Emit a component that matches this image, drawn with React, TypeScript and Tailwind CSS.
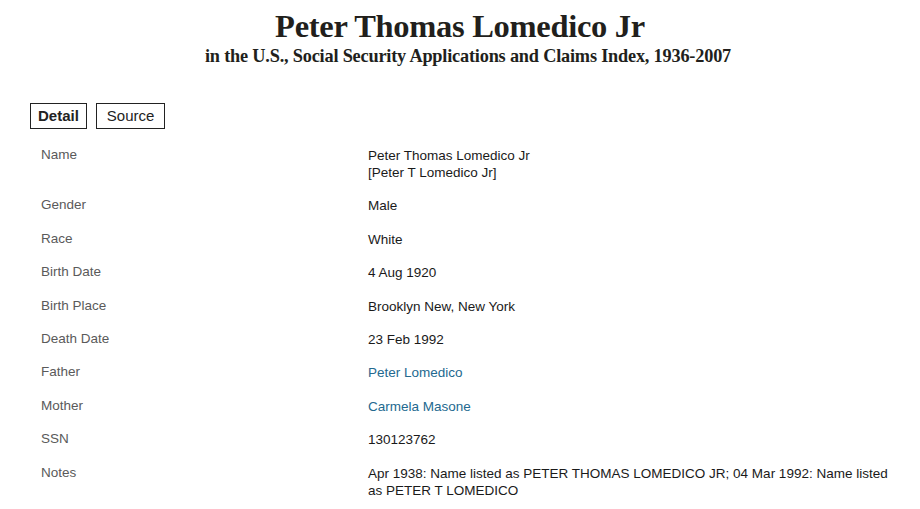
import React from "react";

const rows: { label: string; value: React.ReactNode; link?: boolean }[] = [
  { label: "Name", value: (<><div>Peter Thomas Lomedico Jr</div><div>[Peter T Lomedico Jr]</div></>) },
  { label: "Gender", value: "Male" },
  { label: "Race", value: "White" },
  { label: "Birth Date", value: "4 Aug 1920" },
  { label: "Birth Place", value: "Brooklyn New, New York" },
  { label: "Death Date", value: "23 Feb 1992" },
  { label: "Father", value: "Peter Lomedico", link: true },
  { label: "Mother", value: "Carmela Masone", link: true },
  { label: "SSN", value: "130123762" },
  { label: "Notes", value: "Apr 1938: Name listed as PETER THOMAS LOMEDICO JR; 04 Mar 1992: Name listed as PETER T LOMEDICO" },
];

export default function App() {
  return (
    <div className="w-[920px] h-[509px] bg-white overflow-hidden" style={{ fontFamily: '"Liberation Sans", Arial, sans-serif' }}>
      <div className="flex flex-col items-center pt-[7px]" style={{ fontFamily: '"Liberation Serif", "Times New Roman", serif' }}>
        <h1 className="text-[32.5px] leading-[39px] font-bold text-[#221f1c] tracking-[-0.3px]">Peter Thomas Lomedico Jr</h1>
        <h2 className="text-[18.3px] leading-[20px] font-bold text-[#221f1c] tracking-[-0.2px] pl-[16px]">in the U.S., Social Security Applications and Claims Index, 1936-2007</h2>
      </div>
      <div className="flex gap-[9px] pl-[30px] mt-[37px]">
        <div className="border border-[#222] px-[7px] h-[26px] flex items-center text-[15px] font-bold text-[#222]">Detail</div>
        <div className="border border-[#222] px-[10px] h-[26px] flex items-center text-[15px] text-[#222]">Source</div>
      </div>
      <div className="pl-[41px] pt-[18px]">
        {rows.map((r) => (
          <div key={r.label} className="grid grid-cols-[327px_530px] pb-[16.4px] text-[13.5px] leading-[17px]">
            <div className="text-[#5a5a5a] -mt-[1px]">{r.label}</div>
            <div className={r.link ? "text-[#23698f]" : "text-[#1a1a1a]"}>{r.value}</div>
          </div>
        ))}
      </div>
    </div>
  );
}
